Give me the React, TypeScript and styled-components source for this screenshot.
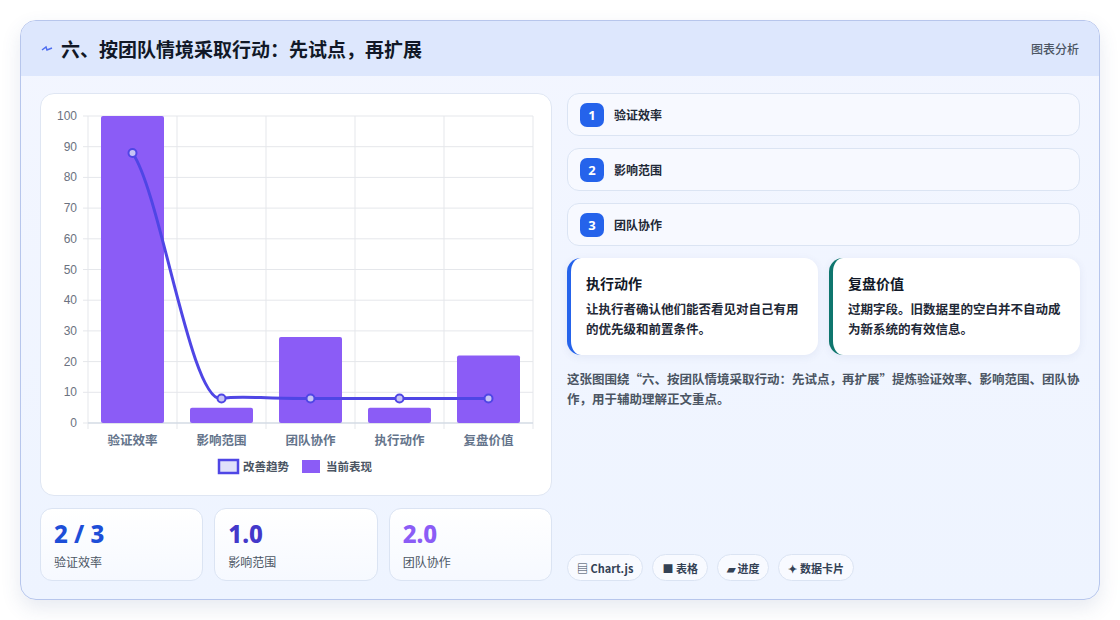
import React from "react";
import styled, { createGlobalStyle } from "styled-components";

const G = createGlobalStyle`
  body{margin:0;background:#fff;font-family:"Noto Sans CJK SC","Noto Sans",sans-serif;}
`;
const Page = styled.div`padding:20px;width:1120px;height:620px;box-sizing:border-box;`;
const Card = styled.div`
  width:1080px;height:580px;box-sizing:border-box;border:1px solid #b7c6ec;border-radius:16px;
  background:linear-gradient(180deg,#f3f6ff,#eef4ff);overflow:hidden;display:flex;flex-direction:column;
  box-shadow:0 8px 20px rgba(60,80,140,.12);
`;
const Header = styled.div`
  height:55px;background:#dde7fd;display:flex;align-items:center;justify-content:space-between;padding:0 20px 0 20px;flex-shrink:0;
`;
const Title = styled.h1`margin:0;font-size:19px;font-weight:700;color:#111827;display:flex;align-items:center;gap:8px;`;
const Hint = styled.span`font-size:12px;color:#4b5563;font-weight:500;`;
const Body = styled.div`flex:1;display:grid;grid-template-columns:512px 513px;gap:15px;padding:17px 19px 19px 19px;`;
const Col = styled.div`display:flex;flex-direction:column;`;
const ChartCard = styled.div`background:#fff;border:1px solid #dfe6f3;border-radius:14px;height:403px;box-sizing:border-box;`;
const Stats = styled.div`display:grid;grid-template-columns:repeat(3,1fr);gap:11px;margin-top:12px;`;
const Stat = styled.div`height:73px;box-sizing:border-box;border:1px solid #dbe4f3;border-radius:12px;background:linear-gradient(180deg,#fff,#f6f9ff);padding:10px 13px;`;
const StatVal = styled.div<{c:string}>`font-size:24px;font-weight:800;color:${p=>p.c};line-height:30px;font-family:"Noto Sans","Noto Sans CJK SC",sans-serif;`;
const StatLbl = styled.div`font-size:12px;color:#4b5563;margin-top:4px;`;
const Item = styled.div`height:43px;box-sizing:border-box;border:1px solid #dbe4f3;border-radius:12px;background:#f7f9ff;display:flex;align-items:center;gap:10px;padding:0 12px;margin-bottom:12px;font-size:12px;font-weight:600;color:#1f2937;`;
const Num = styled.span`width:24px;height:24px;border-radius:7px;background:#2563eb;color:#fff;font-weight:700;font-size:13px;display:flex;align-items:center;justify-content:center;font-family:"Noto Sans",sans-serif;`;
const Pair = styled.div`display:grid;grid-template-columns:1fr 1fr;gap:11px;`;
const Note = styled.div<{c:string}>`height:97px;box-sizing:border-box;background:#fff;border-radius:14px;border-left:4px solid ${p=>p.c};padding:15px 15px 0 15px;box-shadow:0 2px 8px rgba(60,80,140,.08);`;
const NoteT = styled.div`font-size:14px;font-weight:700;color:#111827;margin-bottom:6px;`;
const NoteP = styled.div`font-size:12.5px;font-weight:600;color:#1f2937;line-height:20px;`;
const Caption = styled.p`margin:14px 0 0;font-size:12.5px;font-weight:600;color:#4b5563;line-height:20px;`;
const Tags = styled.div`margin-top:auto;display:flex;gap:9px;`;
const Tag = styled.span`height:27px;box-sizing:border-box;padding:0 9px;border:1px solid #dbe4f3;border-radius:14px;background:#f8faff;font-size:11px;font-weight:700;color:#334155;display:flex;align-items:center;gap:3px;`;

const bars=[100,5,28,5,22];
const cats=["验证效率","影响范围","团队协作","执行动作","复盘价值"];
const X0=47,X1=492,Y0=22,Y1=329,W=(X1-X0)/5;
const y=(v:number)=>Y1-v*(Y1-Y0)/100;

function Chart(){
  return <svg width="510" height="400" style={{display:"block"}} fontFamily='"Noto Sans CJK SC",sans-serif'>
    {Array.from({length:11},(_,i)=>{const v=i*10;return <g key={i}>
      <line x1={X0-5} x2={X1} y1={y(v)} y2={y(v)} stroke="#e5e7eb"/>
      <text x={36} y={y(v)+4} fontSize="12" fill="#6b7280" textAnchor="end" fontFamily="Liberation Sans,sans-serif">{v}</text></g>})}
    {Array.from({length:6},(_,i)=><line key={i} x1={X0+i*W} x2={X0+i*W} y1={Y0} y2={Y1+6} stroke="#e5e7eb"/>)}
    <line x1={X0} x2={X1} y1={Y1} y2={Y1} stroke="#cbd5e1"/>
    {bars.map((b,i)=><rect key={i} x={X0+i*W+13} width={W-26} y={y(b)} height={Y1-y(b)} rx="2" fill="#8b5cf6"/>)}
    {cats.map((c,i)=><text key={c} x={X0+i*W+W/2} y={351} fontSize="12.5" fontWeight="600" fill="#64748b" textAnchor="middle">{c}</text>)}
    <path d={`M91.5 59 C120 100 150 310 180.5 304.5 C200 301 220 305 269.5 304.5 L447.5 304.5`} fill="none" stroke="#4f46e5" strokeWidth="3"/>
    {[[91.5,59],[180.5,304.5],[269.5,304.5],[358.5,304.5],[447.5,304.5]].map(([a,b],i)=><circle key={i} cx={a} cy={b} r="4" fill="#c7c4f5" stroke="#4f46e5" strokeWidth="2"/>)}
    <rect x={178} y={366} width={19} height={13} fill="#e0e0fa" stroke="#4f46e5" strokeWidth="2.5"/>
    <text x={202} y={377} fontSize="11.5" fontWeight="600" fill="#4b5563">改善趋势</text>
    <rect x={261} y={366} width={18} height={13} fill="#8b5cf6"/>
    <text x={285} y={377} fontSize="11.5" fontWeight="600" fill="#4b5563">当前表现</text>
  </svg>;
}

export default function App(){
  return <Page><G/><Card>
    <Header><Title><svg width="12" height="10" viewBox="0 0 12 10"><path d="M1 6 L5 3 L6 6 L11 4" stroke="#4f6ef0" strokeWidth="1.5" fill="none"/></svg>六、按团队情境采取行动：先试点，再扩展</Title><Hint>图表分析</Hint></Header>
    <Body>
      <Col>
        <ChartCard><Chart/></ChartCard>
        <Stats>
          <Stat><StatVal c="#1d4ed8">2 / 3</StatVal><StatLbl>验证效率</StatLbl></Stat>
          <Stat><StatVal c="#4338ca">1.0</StatVal><StatLbl>影响范围</StatLbl></Stat>
          <Stat><StatVal c="#8b5cf6">2.0</StatVal><StatLbl>团队协作</StatLbl></Stat>
        </Stats>
      </Col>
      <Col>
        <Item><Num>1</Num>验证效率</Item>
        <Item><Num>2</Num>影响范围</Item>
        <Item><Num>3</Num>团队协作</Item>
        <Pair>
          <Note c="#2563eb"><NoteT>执行动作</NoteT><NoteP>让执行者确认他们能否看见对自己有用的优先级和前置条件。</NoteP></Note>
          <Note c="#0f766e"><NoteT>复盘价值</NoteT><NoteP>过期字段。旧数据里的空白并不自动成为新系统的有效信息。</NoteP></Note>
        </Pair>
        <Caption>这张图围绕“六、按团队情境采取行动：先试点，再扩展”提炼验证效率、影响范围、团队协作，用于辅助理解正文重点。</Caption>
        <Tags><Tag>▤ Chart.js</Tag><Tag>■ 表格</Tag><Tag>▰ 进度</Tag><Tag>✦ 数据卡片</Tag></Tags>
      </Col>
    </Body>
  </Card></Page>;
}
